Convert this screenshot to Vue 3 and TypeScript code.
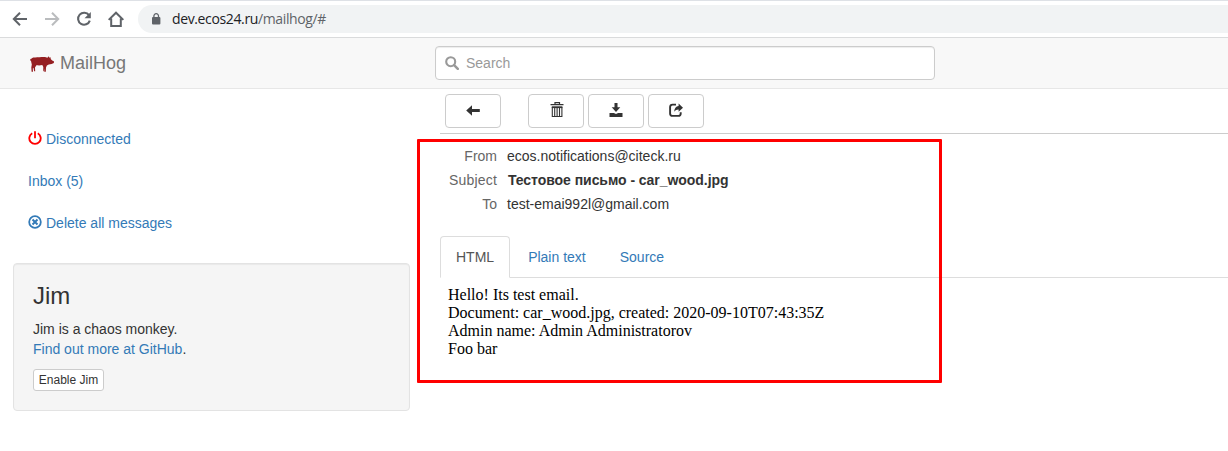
<script setup lang="ts">
interface MailHeader {
  label: string
  value: string
  kind: string
}

const headers: MailHeader[] = [
  { label: 'From', value: 'ecos.notifications@citeck.ru', kind: 'from' },
  { label: 'Subject', value: 'Тестовое письмо - car_wood.jpg', kind: 'subject' },
  { label: 'To', value: 'test-emai992l@gmail.com', kind: 'to' },
]

const tabs: string[] = ['HTML', 'Plain text', 'Source']
const activeTab = 'HTML'

const body: string[] = [
  'Hello! Its test email.',
  'Document: car_wood.jpg, created: 2020-09-10T07:43:35Z',
  'Admin name: Admin Administratorov',
  'Foo bar',
]
</script>

<template>
  <div class="window">
    <div class="browser-bar">
      <svg class="nav-icon" viewBox="0 0 16 16"><path d="M15 8H2M8 1.7 1.8 8 8 14.3" fill="none" stroke="#5f6368" stroke-width="2" /></svg>
      <svg class="nav-icon" viewBox="0 0 16 16"><path d="M1 8h13M8 1.7 14.2 8 8 14.3" fill="none" stroke="#babcbe" stroke-width="2" /></svg>
      <svg class="nav-icon" viewBox="0 0 16 16">
        <path d="M13 4.2A6 6 0 1 0 13.8 9.6" fill="none" stroke="#5f6368" stroke-width="2.1" />
        <path d="M14.8 1v6.3H8.5z" fill="#5f6368" />
      </svg>
      <svg class="nav-icon" viewBox="0 0 16 16"><path d="M.7 8.9 8 1.7l7.3 7.2M3.2 7.5V15h9.6V7.5" fill="none" stroke="#5f6368" stroke-width="2" /></svg>
      <div class="address">
        <svg class="lock" viewBox="0 0 10 12">
          <rect x="1" y="4" width="8.4" height="7.6" rx="1" fill="#5f6368" />
          <path d="M2.9 5V3a2.3 2.3 0 0 1 4.6 0v2" fill="none" stroke="#5f6368" stroke-width="1.3" />
        </svg>
        <span class="url"><span class="host">dev.ecos24.ru</span>/mailhog/#</span>
      </div>
    </div>

    <header class="navbar">
      <a class="brand">
        <svg class="hog" viewBox="0 0 24 16">
          <path fill="#951f22" d="M.2 2.8 1 3.2C1.4 1.9 2.8 1.4 4.5 1.4 7.5 1.5 12 .9 15 1.1L17.5 1.8 18.4.2 19.4 1.7 20.3 1 20.9 3.2 22.2 4.4 23.9 5.2V7L21.6 8 18.8 8.4 16.9 9.6 16 11.6 15.8 15.7H14.3L14.2 12.4 13.8 15.3H13.2L13.3 11 12.3 9.1C10 9.6 8 9.4 6.4 9.3L5 11.4 5.2 15.2H4.1L3.5 11.8 2.8 12.6 3 15.7H1.6L1.3 11.4 1.8 8.5 1 5 .3 4.4z" />
        </svg>
        <span>MailHog</span>
      </a>
      <div class="search">
        <svg class="glyph" viewBox="0 0 14 14">
          <circle cx="5.7" cy="5.7" r="4.5" fill="none" stroke="#999" stroke-width="2.1" />
          <path d="m9.1 9.1 3.7 3.7" stroke="#999" stroke-width="2.5" stroke-linecap="round" />
        </svg>
        <span>Search</span>
      </div>
    </header>

    <div class="page">
      <aside class="sidebar">
        <a class="side-link">
          <svg class="glyph" viewBox="0 0 14 14">
            <path d="M4.2 2.3a5.7 5.7 0 1 0 5.6 0" fill="none" stroke="#f00" stroke-width="1.8" />
            <path d="M7 .3v6.9" stroke="#f00" stroke-width="1.8" />
          </svg>
          <span>Disconnected</span>
        </a>
        <a class="side-link"><span>Inbox (5)</span></a>
        <a class="side-link">
          <svg class="glyph" viewBox="0 0 14 14">
            <circle cx="7" cy="7" r="5.8" fill="none" stroke="#337ab7" stroke-width="1.8" />
            <path d="m4.5 4.5 5 5m0-5-5 5" stroke="#337ab7" stroke-width="2" />
          </svg>
          <span>Delete all messages</span>
        </a>
        <section class="well">
          <h3>Jim</h3>
          <p>Jim is a chaos monkey.<br><a>Find out more at GitHub</a>.</p>
          <button class="small-btn" type="button">Enable Jim</button>
        </section>
      </aside>

      <main class="content">
        <div class="toolbar">
          <button class="btn back" type="button">
            <svg class="glyph" viewBox="0 0 14 14"><path fill="#333" d="M.2 6.5 6 1.2v3.8h7.8v3H6v3.8z" /></svg>
          </button>
          <button class="btn" type="button">
            <svg class="trash" viewBox="0 0 14 16">
              <path d="M.5 2.6h13M5 2.2V.6h4.5v1.6" fill="none" stroke="#333" stroke-width="1.2" />
              <path d="M1.8 4.3h10.6v1.8H1.8z" fill="#333" />
              <path d="M2.3 5v9.5h9.6V5M4.7 5v9.5M7.1 5v9.5M9.5 5v9.5" fill="none" stroke="#333" stroke-width="1.1" />
            </svg>
          </button>
          <button class="btn" type="button">
            <svg class="glyph" viewBox="0 0 14 14"><path fill="#333" d="M5.5 0h3v4.2H11.3L7 8.9 2.7 4.2H5.5zM.5 9.9h4.4L7 11l2.1-1.1h4.4V14H.5z" /></svg>
          </button>
          <button class="btn" type="button">
            <svg class="glyph" viewBox="0 0 14 14">
              <path d="M7 1.6H3.6A2.5 2.5 0 0 0 1.1 4.1v6.3a2.5 2.5 0 0 0 2.5 2.5h5.6a2.5 2.5 0 0 0 2.5-2.5V9.2" fill="none" stroke="#333" stroke-width="1.9" />
              <path fill="#333" d="M9.6.6 14 4.7 9.6 8.7V6.4C7.8 6.3 6.5 7.1 5.2 8.7 5.3 5.3 6.9 3.2 9.6 3z" />
            </svg>
          </button>
        </div>

        <dl class="headers">
          <div v-for="h in headers" :key="h.kind" class="header-row">
            <dt :class="'l-' + h.kind">{{ h.label }}</dt>
            <dd :class="'v-' + h.kind">{{ h.value }}</dd>
          </div>
        </dl>

        <nav class="tabs">
          <a v-for="t in tabs" :key="t" class="tab" :class="{ active: t === activeTab }">{{ t }}</a>
        </nav>

        <div class="mail-body">
          <div v-for="(line, i) in body" :key="i">{{ line }}</div>
        </div>
      </main>
    </div>

    <div class="highlight"></div>
  </div>
</template>

<style>
html,
body {
  margin: 0;
  background: #fff;
  overflow: hidden;
}
</style>

<style scoped>
* {
  box-sizing: border-box;
}
.window {
  position: relative;
  width: 1228px;
  height: 451px;
  overflow: hidden;
  background: #fff;
  color: #333;
  font: 14px/20px "Liberation Sans", Arial, sans-serif;
  white-space: nowrap;
}
svg {
  display: block;
  flex: none;
}
.browser-bar {
  display: flex;
  align-items: center;
  height: 38px;
  padding-left: 12px;
  border-top: 1px solid #dee1e6;
  border-bottom: 1px solid #dadbdc;
}
.nav-icon {
  width: 16px;
  height: 16px;
  margin-right: 16px;
}
.address {
  flex: 1;
  display: flex;
  align-items: center;
  height: 28px;
  margin-left: -2px;
  padding-left: 13px;
  border-radius: 14px 0 0 14px;
  background: #f1f3f4;
}
.lock {
  width: 10px;
  height: 12px;
  margin-right: 11px;
}
.url {
  color: #5f6368;
  font: 14px/20px "Open Sans", "Noto Sans", sans-serif;
  letter-spacing: -0.37px;
}
.host {
  color: #202124;
}
.navbar {
  display: flex;
  height: 51px;
  background: #f8f8f8;
  border-bottom: 1px solid #e7e7e7;
}
.brand {
  display: flex;
  align-items: center;
  width: 435px;
  padding-left: 30px;
  color: #777;
  font-size: 18px;
}
.hog {
  width: 24px;
  height: 16px;
  margin: 2px 6px 0 0;
}
.search {
  display: flex;
  align-items: center;
  width: 500px;
  height: 34px;
  margin-top: 8px;
  padding-left: 9px;
  gap: 7px;
  border: 1px solid #ccc;
  border-radius: 4px;
  background: #fff;
  box-shadow: inset 0 1px 1px rgba(0, 0, 0, 0.075);
  color: #999;
}
.glyph {
  width: 14px;
  height: 14px;
}
.page {
  display: flex;
}
.sidebar {
  width: 410px;
  padding: 29px 0 0 13px;
}
.side-link {
  display: flex;
  align-items: center;
  gap: 4px;
  height: 42px;
  padding-left: 15px;
  color: #337ab7;
}
.side-link .glyph {
  margin-top: -2px;
}
.well {
  height: 148px;
  margin-top: 19px;
  padding: 19px;
  border: 1px solid #e3e3e3;
  border-radius: 4px;
  background: #f5f5f5;
  box-shadow: inset 0 1px 1px rgba(0, 0, 0, 0.05);
}
h3 {
  margin: 0 0 10px;
  font-size: 24px;
  font-weight: 500;
  line-height: 26px;
}
p {
  margin: 0 0 10px;
}
p a {
  color: #337ab7;
}
.small-btn {
  width: 71px;
  height: 22px;
  padding: 0;
  border: 1px solid #ccc;
  border-radius: 3px;
  background: #fff;
  color: #333;
  font: 12px/18px "Liberation Sans", Arial, sans-serif;
}
.content {
  flex: 1;
  margin-left: 30px;
}
.toolbar {
  display: flex;
  gap: 4px;
  height: 45px;
  padding: 5px 0 0 5px;
  border-bottom: 1px solid #ccc;
}
.btn {
  display: flex;
  align-items: center;
  justify-content: center;
  width: 56px;
  height: 34px;
  padding: 0 0 2px;
  border: 1px solid #ccc;
  border-radius: 4px;
  background: #fff;
}
.back {
  margin-right: 23px;
  padding-bottom: 0;
}
.trash {
  width: 14px;
  height: 16px;
  margin-left: 2px;
}
.headers {
  margin: 10px 0 20px;
}
.header-row {
  display: flex;
  height: 24px;
  line-height: 24px;
}
dt {
  width: 57px;
  text-align: right;
  color: #666;
}
.l-subject {
  letter-spacing: 0.2px;
}
dd {
  margin: 0 0 0 10px;
}
.v-subject {
  font-weight: 700;
  margin-left: 11px;
  letter-spacing: -0.05px;
}
.tabs {
  display: flex;
  gap: 2px;
  height: 42px;
  border-bottom: 1px solid #ddd;
}
.tab {
  height: 42px;
  padding: 10px 15px;
  border: 1px solid transparent;
  color: #337ab7;
}
.tab.active {
  border-color: #ddd #ddd #fff;
  border-radius: 4px 4px 0 0;
  background: #fff;
  color: #555;
}
.mail-body {
  padding: 8px;
  color: #000;
  font: 16px/18px "Liberation Serif", "Times New Roman", serif;
}
.highlight {
  position: absolute;
  left: 417px;
  top: 139px;
  width: 525px;
  height: 244px;
  border: 3px solid #f00;
  border-radius: 1px;
}
</style>
